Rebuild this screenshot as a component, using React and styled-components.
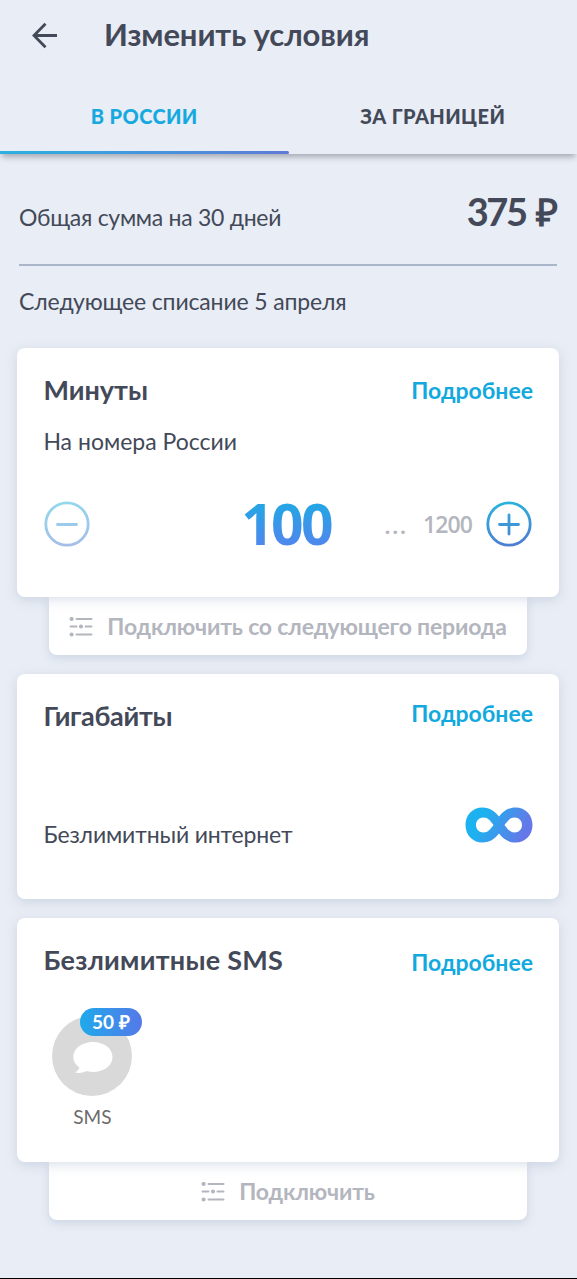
import React, { useState } from 'react';
import styled, { createGlobalStyle } from 'styled-components';

const GlobalStyle = createGlobalStyle`
  * {
    box-sizing: border-box;
  }
  body {
    margin: 0;
    background: #e9edf5;
    color: #434958;
    font-family: Lato, 'Open Sans', sans-serif;
  }
  h1, h2, p {
    margin: 0;
  }
  button {
    padding: 0;
    border: 0;
    background: none;
    color: inherit;
    font: inherit;
    cursor: pointer;
  }
`;

const ArrowIcon = () => (
  <svg width='28' height='28' viewBox='0 0 28 28' fill='none' stroke='#434958' strokeWidth='2.8'>
    <path d='M26 14.500H3M14.500 2.800L3 14.500l11.500 11.700' />
  </svg>
);

const ListIcon = () => (
  <svg width='24' height='20' viewBox='0 0 24 20' fill='#b3b6be' stroke='#b3b6be' strokeWidth='2' strokeLinecap='round'>
    <path d='M7.5 2H22.5M1.5 9.5H7.5M16.5 9.5H22.5M7.5 17.5H22.5' />
    <circle cx='2.6' cy='2' r='1.1' />
    <circle cx='12' cy='9.5' r='1.1' />
    <circle cx='2.6' cy='17.5' r='1.1' />
  </svg>
);

const RoundIcon = ({ plus }) => {
  const id = plus ? 'plusFill' : 'minusFill';
  return (
    <svg width='46' height='46' viewBox='0 0 46 46' fill='none' stroke={`url(#${id})`} strokeWidth='2.8' strokeLinecap='round'>
      <defs>
        <linearGradient id={id} gradientUnits='userSpaceOnUse' x1='20' y1='0' x2='26' y2='46'>
          <stop offset='0' stopColor='#28b3dc' />
          <stop offset='1' stopColor='#4f7cd3' />
        </linearGradient>
      </defs>
      <circle cx='23' cy='23' r='21.2' />
      <path d={plus ? 'M13.5 23.5H32.5M23 14V33' : 'M13.5 23.5H32.5'} />
    </svg>
  );
};

const InfinityIcon = () => (
  <svg width='68' height='36' viewBox='0 0 68 36'>
    <defs>
      <linearGradient id='infinityFill' x1='0' y1='0' x2='1' y2='0.25'>
        <stop offset='0.3' stopColor='#1cb2ef' />
        <stop offset='1' stopColor='#6478e8' />
      </linearGradient>
    </defs>
    <path
      fill='url(#infinityFill)'
      fillRule='evenodd'
      d='M17.5 .5C25 .5 30 4.500 34 9.500C38 4.500 43 .5 50.500 .5C60.500 .5 67.500 8 67.500 18C67.500 28 60.500 35.500 50.500 35.500C43 35.500 38 31.500 34 26.500C30 31.500 25 35.500 17.500 35.500C7.500 35.500 .5 28 .5 18C.5 8 7.500 .5 17.500 .5ZM18.500 10.500C14 10.500 11 13.700 11 18C11 22.300 14 25.500 18.500 25.500C23 25.500 25.500 22 28.500 18C25.500 14 23 10.500 18.500 10.500ZM49.500 10.500C45 10.500 42.500 14 39.500 18C42.500 22 45 25.500 49.500 25.500C54 25.500 57 22.300 57 18C57 13.700 54 10.500 49.500 10.500Z'
    />
  </svg>
);

const BubbleIcon = () => (
  <svg width='40' height='32' viewBox='0 0 40 32' fill='#fff'>
    <path d='M20 1C31 1 39.500 7.500 39.500 16C39.500 24.500 31 31 20 31C17.500 31 15.500 30.700 13.500 30.100C10 32 5.500 32.400 2 31.500C4.500 30 6 28.500 6.300 26.500C2.500 23.800 .3 20 .3 16C.3 7.500 9 1 20 1Z' />
  </svg>
);

const App = () => {
  const [tab, setTab] = useState(0);
  const [minutes, setMinutes] = useState(100);

  return (
    <Screen>
      <GlobalStyle />
      <Header>
        <TitleRow>
          <button aria-label='Назад'><ArrowIcon /></button>
          <Title>Изменить условия</Title>
        </TitleRow>
        <Tabs>
          <Tab $active={tab === 0} onClick={() => setTab(0)}>В РОССИИ</Tab>
          <Tab $active={tab === 1} onClick={() => setTab(1)}>ЗА ГРАНИЦЕЙ</Tab>
        </Tabs>
      </Header>

      <Summary>
        <Total>
          <Text $spacing='-0.28px'>Общая сумма на 30 дней</Text>
          <Price>375 ₽</Price>
        </Total>
        <NextCharge>Следующее списание 5 апреля</NextCharge>
      </Summary>

      <Cards>
        <section>
          <Card $height='249px'>
            <CardHead>
              <CardTitle>Минуты</CardTitle>
              <More>Подробнее</More>
            </CardHead>
            <Hint>На номера России</Hint>
            <Stepper>
              <StepButton aria-label='Меньше' disabled={minutes === 100} onClick={() => setMinutes(minutes - 100)}>
                <RoundIcon />
              </StepButton>
              <Amount>{minutes}</Amount>
              <Limit>
                <Dots>...</Dots>
                <Max>1200</Max>
                <StepButton aria-label='Больше' disabled={minutes === 1200} onClick={() => setMinutes(minutes + 100)}>
                  <RoundIcon plus />
                </StepButton>
              </Limit>
            </Stepper>
          </Card>
          <Connect><ListIcon />Подключить со следующего периода</Connect>
        </section>

        <Card $height='224.5px'>
          <CardHead>
            <CardTitle $spacing='-0.3px'>Гигабайты</CardTitle>
            <More $lift='3px'>Подробнее</More>
          </CardHead>
          <Unlimited>
            <Text $spacing='-0.15px'>Безлимитный интернет</Text>
            <InfinityIcon />
          </Unlimited>
        </Card>

        <section>
          <Card $height='244px'>
            <CardHead>
              <CardTitle $spacing='0.25px'>Безлимитные SMS</CardTitle>
              <More $lift='-2px'>Подробнее</More>
            </CardHead>
            <Service>
              <ServiceIcon>
                <BubbleIcon />
                <Badge>50 ₽</Badge>
              </ServiceIcon>
              <ServiceName>SMS</ServiceName>
            </Service>
          </Card>
          <Connect><ListIcon />Подключить</Connect>
        </section>
      </Cards>
    </Screen>
  );
};

export default App;

const Screen = styled.main`
  width: 577px;
  height: 1279px;
  overflow: hidden;
  border-bottom: 1px solid #000;
`;

const Header = styled.header`
  height: 154px;
  background: #e9edf5;
  box-shadow: 0 5px 6px -2px rgba(70, 74, 88, 0.42);
`;

const TitleRow = styled.div`
  display: flex;
  align-items: center;
  gap: 45px;
  height: 70px;
  padding-left: 31px;

  svg {
    display: block;
  }
`;

const Title = styled.h1`
  margin-top: -2px;
  font-size: 31px;
  font-weight: 700;
  line-height: 40px;
  letter-spacing: -0.1px;
`;

const Tabs = styled.nav`
  display: flex;
  height: 84px;
`;

const Tab = styled.button`
  display: flex;
  flex: 1;
  flex-direction: column;
  justify-content: space-between;
  align-items: center;
  padding-top: 33px;
  color: ${props => (props.$active ? '#16a9e0' : '#434958')};
  font-size: 20px;
  font-weight: 900;
  line-height: 26px;
  letter-spacing: 0.4px;

  &::after {
    content: '';
    width: 100%;
    height: 3px;
    border-radius: 0 2px 2px 0;
    background: ${props => (props.$active ? 'linear-gradient(90deg, #2bb1e0, #5e7bd6)' : 'none')};
  }
`;

const Summary = styled.section`
  padding: 0 20px 0 19px;
`;

const Total = styled.div`
  display: flex;
  justify-content: space-between;
  height: 112px;
  padding-top: 37px;
  border-bottom: 2px solid #a9b5c8;
`;

const Text = styled.p`
  padding-top: 9px;
  font-size: 23px;
  line-height: 34px;
  letter-spacing: ${props => props.$spacing};
`;

const Price = styled.p`
  margin: -1px 1px 0 0;
  font-size: 38px;
  font-weight: 700;
  line-height: 42px;
  letter-spacing: -2.4px;
  word-spacing: 4px;
`;

const NextCharge = styled.p`
  padding-top: 18px;
  font-size: 23px;
  line-height: 34px;
  letter-spacing: -0.15px;
`;

const Cards = styled.div`
  display: flex;
  flex-direction: column;
  gap: 19.25px;
  padding: 30px 18px 0 17px;
`;

const Card = styled.div`
  position: relative;
  z-index: 1;
  height: ${props => props.$height};
  padding: 24px 26px 0 26.4px;
  border-radius: 8px;
  background: #fff;
  box-shadow: 0 3px 12px rgba(150, 170, 195, 0.35);
`;

const CardHead = styled.div`
  display: flex;
  justify-content: space-between;
  height: 37px;
`;

const CardTitle = styled.h2`
  margin-top: -1px;
  font-size: 27px;
  font-weight: 700;
  line-height: 37px;
  letter-spacing: ${props => props.$spacing};
`;

const More = styled.button`
  height: 37px;
  margin-top: calc(0px - ${props => props.$lift || '0px'});
  color: #12a9de;
  font-size: 23px;
  font-weight: 700;
  line-height: 37px;
`;

const Hint = styled.p`
  padding-top: 15px;
  font-size: 23px;
  line-height: 34px;
`;

const Stepper = styled.div`
  display: grid;
  grid-template-columns: 1fr auto 1fr;
  align-items: center;
  height: 60px;
  margin: 36px 1px 0 0.6px;
`;

const StepButton = styled.button`
  width: 46px;
  height: 46px;

  &:disabled {
    opacity: 0.5;
  }

  svg {
    display: block;
  }
`;

const Amount = styled.span`
  margin-top: -2px;
  padding: 0 4px 0 0;
  background: linear-gradient(180deg, #25a5e5 20%, #4b8aec 80%);
  background-clip: text;
  color: transparent;
  font-family: 'Open Sans', sans-serif;
  font-size: 57px;
  font-weight: 700;
  line-height: 60px;
  letter-spacing: -2.8px;
`;

const Limit = styled.div`
  display: flex;
  justify-content: flex-end;
  align-items: center;
  color: #b3b6be;
  font-size: 23px;
  font-weight: 700;
`;

const Dots = styled.span`
  padding-top: 2px;
  margin-right: 15px;
  letter-spacing: 2.3px;
`;

const Max = styled.span`
  margin-right: 14px;
  font-family: 'Open Sans', sans-serif;
  font-weight: 600;
  letter-spacing: -0.9px;
`;

const Connect = styled.button`
  display: flex;
  justify-content: center;
  align-items: center;
  gap: 14px;
  width: 478px;
  height: 58px;
  margin: 0 auto;
  border-radius: 0 0 8px 8px;
  background: #fff;
  box-shadow: 0 3px 10px rgba(150, 170, 195, 0.35);
  color: #b3b6be;
  font-size: 23px;
  font-weight: 700;
  letter-spacing: -0.2px;

  svg {
    margin-top: 2px;
  }
`;

const Unlimited = styled.div`
  display: flex;
  justify-content: space-between;
  align-items: flex-start;
  padding-top: 72px;

  p {
    padding-top: 10px;
  }
`;

const Service = styled.div`
  width: 80px;
  margin: 37px 0 0 9px;
  text-align: center;
`;

const ServiceIcon = styled.div`
  position: relative;
  display: grid;
  place-items: center;
  height: 80px;
  padding: 2px 0 0 2px;
  border-radius: 50%;
  background: #d9d9d9;
`;

const Badge = styled.span`
  position: absolute;
  top: -8px;
  left: 27.5px;
  width: 62px;
  height: 28px;
  border-radius: 14px;
  background: linear-gradient(90deg, #1fa9ec, #5579e8);
  color: #fff;
  font-size: 19px;
  font-weight: 700;
  line-height: 27px;
`;

const ServiceName = styled.p`
  padding-top: 8px;
  color: #6b6b6b;
  font-size: 19px;
  line-height: 26px;
`;
